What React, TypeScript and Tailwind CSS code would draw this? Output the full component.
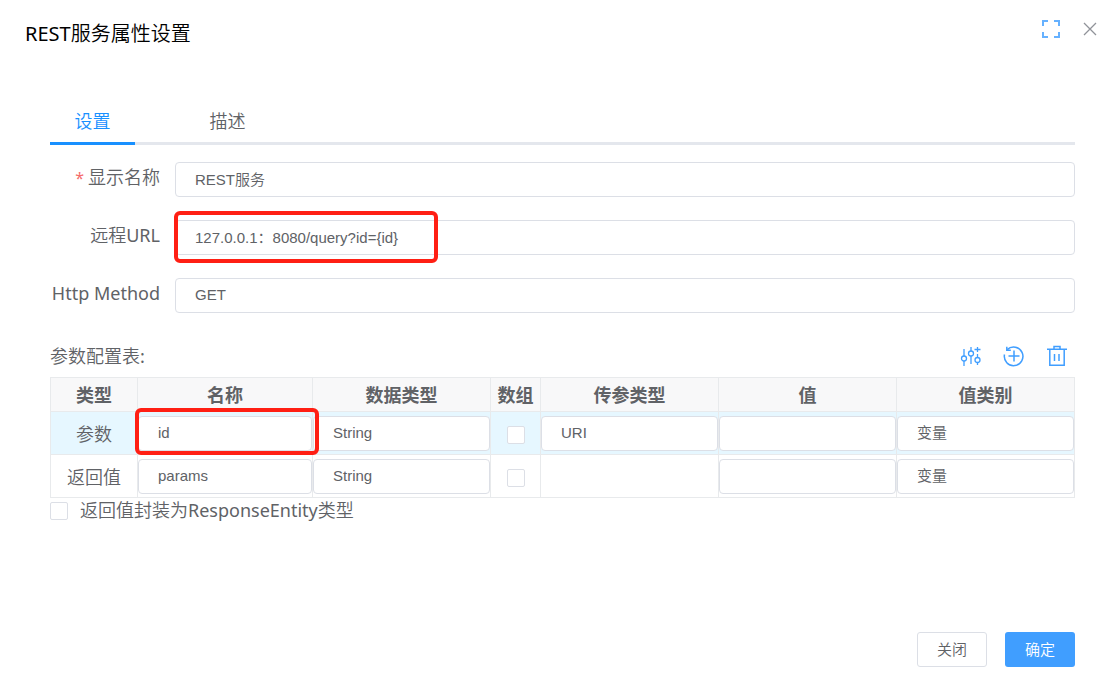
import { useState } from "react";
import type { ReactNode } from "react";
import clsx from "clsx";

const field =
  "block h-[35px] w-full appearance-none rounded border border-[#dcdfe6] bg-white px-[19px] font-['Liberation_Sans','Noto_Sans_CJK_SC_DemiLight','Noto_Sans_CJK_SC',sans-serif] text-[15px] text-[#606266] outline-none focus:border-[#409eff]";

const checkbox =
  "block size-[18px] shrink-0 appearance-none rounded-xs border border-[#dcdfe6] bg-white checked:border-[#409eff] checked:bg-[#409eff]";

const columns = [
  { title: "类型", width: "w-[87px]" },
  { title: "名称", width: "w-[175px]" },
  { title: "数据类型", width: "" },
  { title: "数组", width: "w-[50px]" },
  { title: "传参类型", width: "" },
  { title: "值", width: "" },
  { title: "值类别", width: "" },
];

const rows = [
  { type: "参数", name: "id", dataType: "String", passType: "URI", kind: "变量" },
  { type: "返回值", name: "params", dataType: "String", passType: "", kind: "变量" },
];

const tabs = ["设置", "描述"];

function TextField({ id, label, value }: { id?: string; label: string; value?: string }) {
  return <input id={id} aria-label={label} defaultValue={value} className={clsx(field, "pb-0.5")} />;
}

function Picker({ id, label, value, options }: { id?: string; label: string; value: string; options: string[] }) {
  return (
    <select id={id} aria-label={label} defaultValue={value} className={field}>
      {options.map((o) => (
        <option key={o}>{o}</option>
      ))}
    </select>
  );
}

function FormRow({ id, label, required, children }: { id: string; label: string; required?: boolean; children: ReactNode }) {
  return (
    <div className="flex">
      <label htmlFor={id} className="w-[125px] shrink-0 pr-[15px] text-right text-[18px] leading-[30px]">
        {required && <span className="mr-1 text-base text-[#f56c6c]">*</span>}
        {label}
      </label>
      <div className="relative min-w-0 flex-1">{children}</div>
    </div>
  );
}

function FullscreenIcon() {
  return (
    <svg width="18" height="18" viewBox="0 0 18 18" fill="none" stroke="#66b1ff" strokeWidth="2">
      <path d="M1 6V1h5M12 1h5v5M17 12v5h-5M6 17H1v-5" />
    </svg>
  );
}

function CloseIcon() {
  return (
    <svg width="14" height="14" viewBox="0 0 14 14" fill="none" stroke="#909399" strokeWidth="1.3">
      <path d="M1 1l12 12M13 1L1 13" />
    </svg>
  );
}

function SlidersIcon() {
  return (
    <svg width="22" height="22" viewBox="0 0 22 22" fill="none" stroke="#409eff" strokeWidth="1.3">
      <path d="M4 4v7M4 16v5M11 2v4M11 11v8M17.500 9v3M17.500 18v2M14.500 4.500h6M17.500 2v5" />
      <circle cx="4" cy="13.500" r="2.500" />
      <circle cx="11" cy="8.500" r="2.500" />
      <circle cx="17.500" cy="15" r="2.500" />
    </svg>
  );
}

function AddIcon() {
  return (
    <svg width="22" height="22" viewBox="0 0 22 22" fill="none" stroke="#409eff" strokeWidth="1.5">
      <path d="M1.500 9.500A9.300 9.300 0 1 0 4.200 4.600M11 5.500v11M5.500 11h11" />
      <path d="M3.800 1.800v3.400h4" />
    </svg>
  );
}

function TrashIcon() {
  return (
    <svg width="22" height="22" viewBox="0 0 22 22" fill="none" stroke="#409eff" strokeWidth="1.5">
      <path d="M1 4.200h20M8 4V1.500h6V4M3.800 4.500v15.700h14.400V4.500M8.500 9v7M13 9v7" />
    </svg>
  );
}

export default function App() {
  const [tab, setTab] = useState("设置");

  return (
    <div className="flex min-h-screen flex-col bg-white font-['Noto_Sans','Noto_Sans_CJK_SC_DemiLight','Noto_Sans_CJK_SC',sans-serif] text-[#606266]">
      <header className="flex items-start justify-between pt-[18px] pr-[23px] pl-[25px]">
        <h1 className="text-[20px] leading-8 text-black">REST服务属性设置</h1>
        <div className="flex h-[22px] items-center gap-[23px]">
          <button type="button" aria-label="全屏">
            <FullscreenIcon />
          </button>
          <button type="button" aria-label="关闭窗口">
            <CloseIcon />
          </button>
        </div>
      </header>

      <main className="mt-[47px] pr-[45px] pl-[50px]">
        <div role="tablist" className="flex h-12 gap-[50px] border-b-[3px] border-[#e4e7ed]">
          {tabs.map((t) => (
            <button
              key={t}
              type="button"
              role="tab"
              aria-selected={t === tab}
              onClick={() => setTab(t)}
              className={clsx(
                "h-12 w-[85px] border-b-[3px] pt-1 text-[18px]",
                t === tab ? "border-[#1890ff] text-[#1890ff]" : "border-transparent",
              )}
            >
              {t}
            </button>
          ))}
        </div>

        <div className="mt-[17px] flex flex-col gap-[23px]">
          <FormRow id="display-name" label="显示名称" required>
            <TextField id="display-name" label="显示名称" value="REST服务" />
          </FormRow>
          <FormRow id="remote-url" label="远程URL">
            <TextField id="remote-url" label="远程URL" value="127.0.0.1：8080/query?id={id}" />
            <div className="pointer-events-none absolute -top-[9px] -left-px h-[52px] w-[264px] rounded-md border-4 border-[#ff1f14]" />
          </FormRow>
          <FormRow id="http-method" label="Http Method">
            <Picker id="http-method" label="Http Method" value="GET" options={["GET", "POST", "PUT", "DELETE"]} />
          </FormRow>
        </div>

        <div className="mt-[26px] flex h-[38px] items-center justify-between pr-[7px] pb-1">
          <h2 className="text-[18px]">参数配置表:</h2>
          <div className="flex items-center gap-[21px]">
            <button type="button" aria-label="配置">
              <SlidersIcon />
            </button>
            <button type="button" aria-label="添加">
              <AddIcon />
            </button>
            <button type="button" aria-label="删除">
              <TrashIcon />
            </button>
          </div>
        </div>

        <table className="w-full table-fixed border-collapse text-center text-[18px]">
          <thead className="font-['Noto_Sans','Noto_Sans_CJK_SC',sans-serif]">
            <tr className="h-[34px] bg-[#f8f8f9]">
              {columns.map((c) => (
                <th key={c.title} className={clsx("border border-[#e8eaec] p-0 pt-px leading-8 font-bold", c.width)}>
                  {c.title}
                </th>
              ))}
            </tr>
          </thead>
          <tbody>
            {rows.map((r, i) => (
              <tr key={r.type} className={clsx("h-[43px] [&>td]:border [&>td]:border-[#e8eaec] [&>td]:p-0", i === 0 && "bg-[#e6f7ff]")}>
                <td className="pt-0.5!">{r.type}</td>
                <td>
                  <div className="relative">
                    <TextField label="名称" value={r.name} />
                    {i === 0 && (
                      <div className="pointer-events-none absolute -top-2 -right-[7px] -left-[3px] h-[47px] rounded-md border-4 border-[#ff1f14]" />
                    )}
                  </div>
                </td>
                <td>
                  <Picker label="数据类型" value={r.dataType} options={["String", "Integer", "Boolean"]} />
                </td>
                <td className="pt-1!">
                  <input type="checkbox" aria-label="数组" className={clsx(checkbox, "mx-auto")} />
                </td>
                <td>{r.passType && <Picker label="传参类型" value={r.passType} options={["URI", "Body"]} />}</td>
                <td>
                  <TextField label="值" />
                </td>
                <td>
                  <Picker label="值类别" value={r.kind} options={["变量", "常量"]} />
                </td>
              </tr>
            ))}
          </tbody>
        </table>

        <label className="flex h-[25px] items-center gap-3 text-[18px]">
          <input type="checkbox" className={checkbox} />
          返回值封装为ResponseEntity类型
        </label>
      </main>

      <footer className="mt-auto flex justify-end gap-[18px] pr-[45px] pb-[19px] text-[15px]">
        <button type="button" className="h-[35px] w-[70px] rounded-[3px] border border-[#dcdfe6] bg-white">
          关闭
        </button>
        <button type="button" className="h-[35px] w-[70px] rounded-[3px] bg-[#409eff] font-medium text-white">
          确定
        </button>
      </footer>
    </div>
  );
}
